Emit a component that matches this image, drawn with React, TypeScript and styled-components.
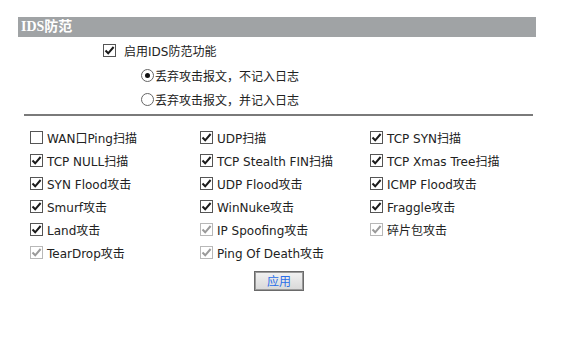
import React from "react";
import styled, { createGlobalStyle } from "styled-components";

const GlobalStyle = createGlobalStyle`
  body {
    margin: 0;
    background: #fff;
    font-family: "DejaVu Sans", "Noto Sans CJK SC", sans-serif;
    font-size: 12px;
    color: #222;
  }
`;

const Page = styled.div`
  width: 567px;
  height: 362px;
  padding-top: 17px;
  box-sizing: border-box;
`;

const Header = styled.div`
  margin-left: 18px;
  width: 518px;
  height: 20px;
  background: #a0a3a5;
  color: #fff;
  font-family: "Liberation Serif", "Noto Sans CJK SC", serif;
  font-weight: bold;
  font-size: 14px;
  line-height: 20px;
  padding-left: 3px;
  box-sizing: border-box;
`;

const Options = styled.div`
  display: flex;
  flex-direction: column;
`;

const Line = styled.label<{ $indent: number; $height?: number }>`
  display: flex;
  align-items: center;
  height: ${(p) => p.$height ?? 24}px;
  padding-left: ${(p) => p.$indent}px;
  white-space: nowrap;
`;

const Box = styled.span<{ $disabled?: boolean }>`
  width: 11px;
  height: 11px;
  border: 1px solid ${(p) => (p.$disabled ? "#b8b8b8" : "#555")};
  background: #fff;
  display: inline-flex;
  align-items: center;
  justify-content: center;
  flex: none;
  margin-right: 4px;
`;

const Radio = styled.span<{ $on?: boolean }>`
  width: 11px;
  height: 11px;
  border: 1px solid #666;
  border-radius: 50%;
  background: #fff;
  display: inline-flex;
  align-items: center;
  justify-content: center;
  flex: none;
  margin-right: 1px;
  &::after {
    content: "";
    width: 5px;
    height: 5px;
    border-radius: 50%;
    background: ${(p) => (p.$on ? "#111" : "transparent")};
  }
`;

const Rule = styled.div`
  margin: 3px 0 0 24px;
  width: 509px;
  height: 2px;
  background: #7a7a7a;
`;

const Grid = styled.div`
  display: grid;
  grid-template-columns: 170px 170px 170px;
  grid-auto-rows: 23px;
  padding: 10px 0 0 30px;
`;

const Cell = styled.label`
  display: flex;
  align-items: center;
  white-space: nowrap;
`;

const Actions = styled.div`
  display: flex;
  justify-content: flex-start;
  padding: 7px 0 0 254px;
`;

const Button = styled.button`
  width: 50px;
  height: 20px;
  border: 1px solid #6a6a6a;
  box-shadow: inset 0 0 0 1px #9a9a9a;
  background: linear-gradient(#f2f2f2, #d8d8d8);
  color: #2a6ee8;
  font-family: "Noto Sans CJK SC", sans-serif;
  font-size: 12px;
  padding: 0;
  line-height: 18px;
`;

const Check = ({ disabled }: { disabled?: boolean }) => (
  <Box $disabled={disabled}>
    <svg width="11" height="11" viewBox="0 0 11 11">
      <path
        d="M1.5 5.5 L4.2 8.3 L9.6 2"
        fill="none"
        stroke={disabled ? "#9a9a9a" : "#1a1a1a"}
        strokeWidth="2"
      />
    </svg>
  </Box>
);

const Empty = () => <Box />;

const items: [string, boolean, boolean][] = [
  ["WAN口Ping扫描", false, false],
  ["UDP扫描", true, false],
  ["TCP SYN扫描", true, false],
  ["TCP NULL扫描", true, false],
  ["TCP Stealth FIN扫描", true, false],
  ["TCP Xmas Tree扫描", true, false],
  ["SYN Flood攻击", true, false],
  ["UDP Flood攻击", true, false],
  ["ICMP Flood攻击", true, false],
  ["Smurf攻击", true, false],
  ["WinNuke攻击", true, false],
  ["Fraggle攻击", true, false],
  ["Land攻击", true, false],
  ["IP Spoofing攻击", true, true],
  ["碎片包攻击", true, true],
  ["TearDrop攻击", true, true],
  ["Ping Of Death攻击", true, true],
];

export default function App() {
  return (
    <Page>
      <GlobalStyle />
      <Header>IDS防范</Header>
      <Options>
        <Line $indent={103} $height={26}>
          <Check />
          <span style={{ marginLeft: 4 }}>启用IDS防范功能</span>
        </Line>
        <Line $indent={141}>
          <Radio $on />
          <span>丢弃攻击报文，不记入日志</span>
        </Line>
        <Line $indent={141}>
          <Radio />
          <span>丢弃攻击报文，并记入日志</span>
        </Line>
      </Options>
      <Rule />
      <Grid>
        {items.map(([label, checked, disabled]) => (
          <Cell key={label}>
            {checked ? <Check disabled={disabled} /> : <Empty />}
            <span>{label}</span>
          </Cell>
        ))}
      </Grid>
      <Actions>
        <Button>应用</Button>
      </Actions>
    </Page>
  );
}
